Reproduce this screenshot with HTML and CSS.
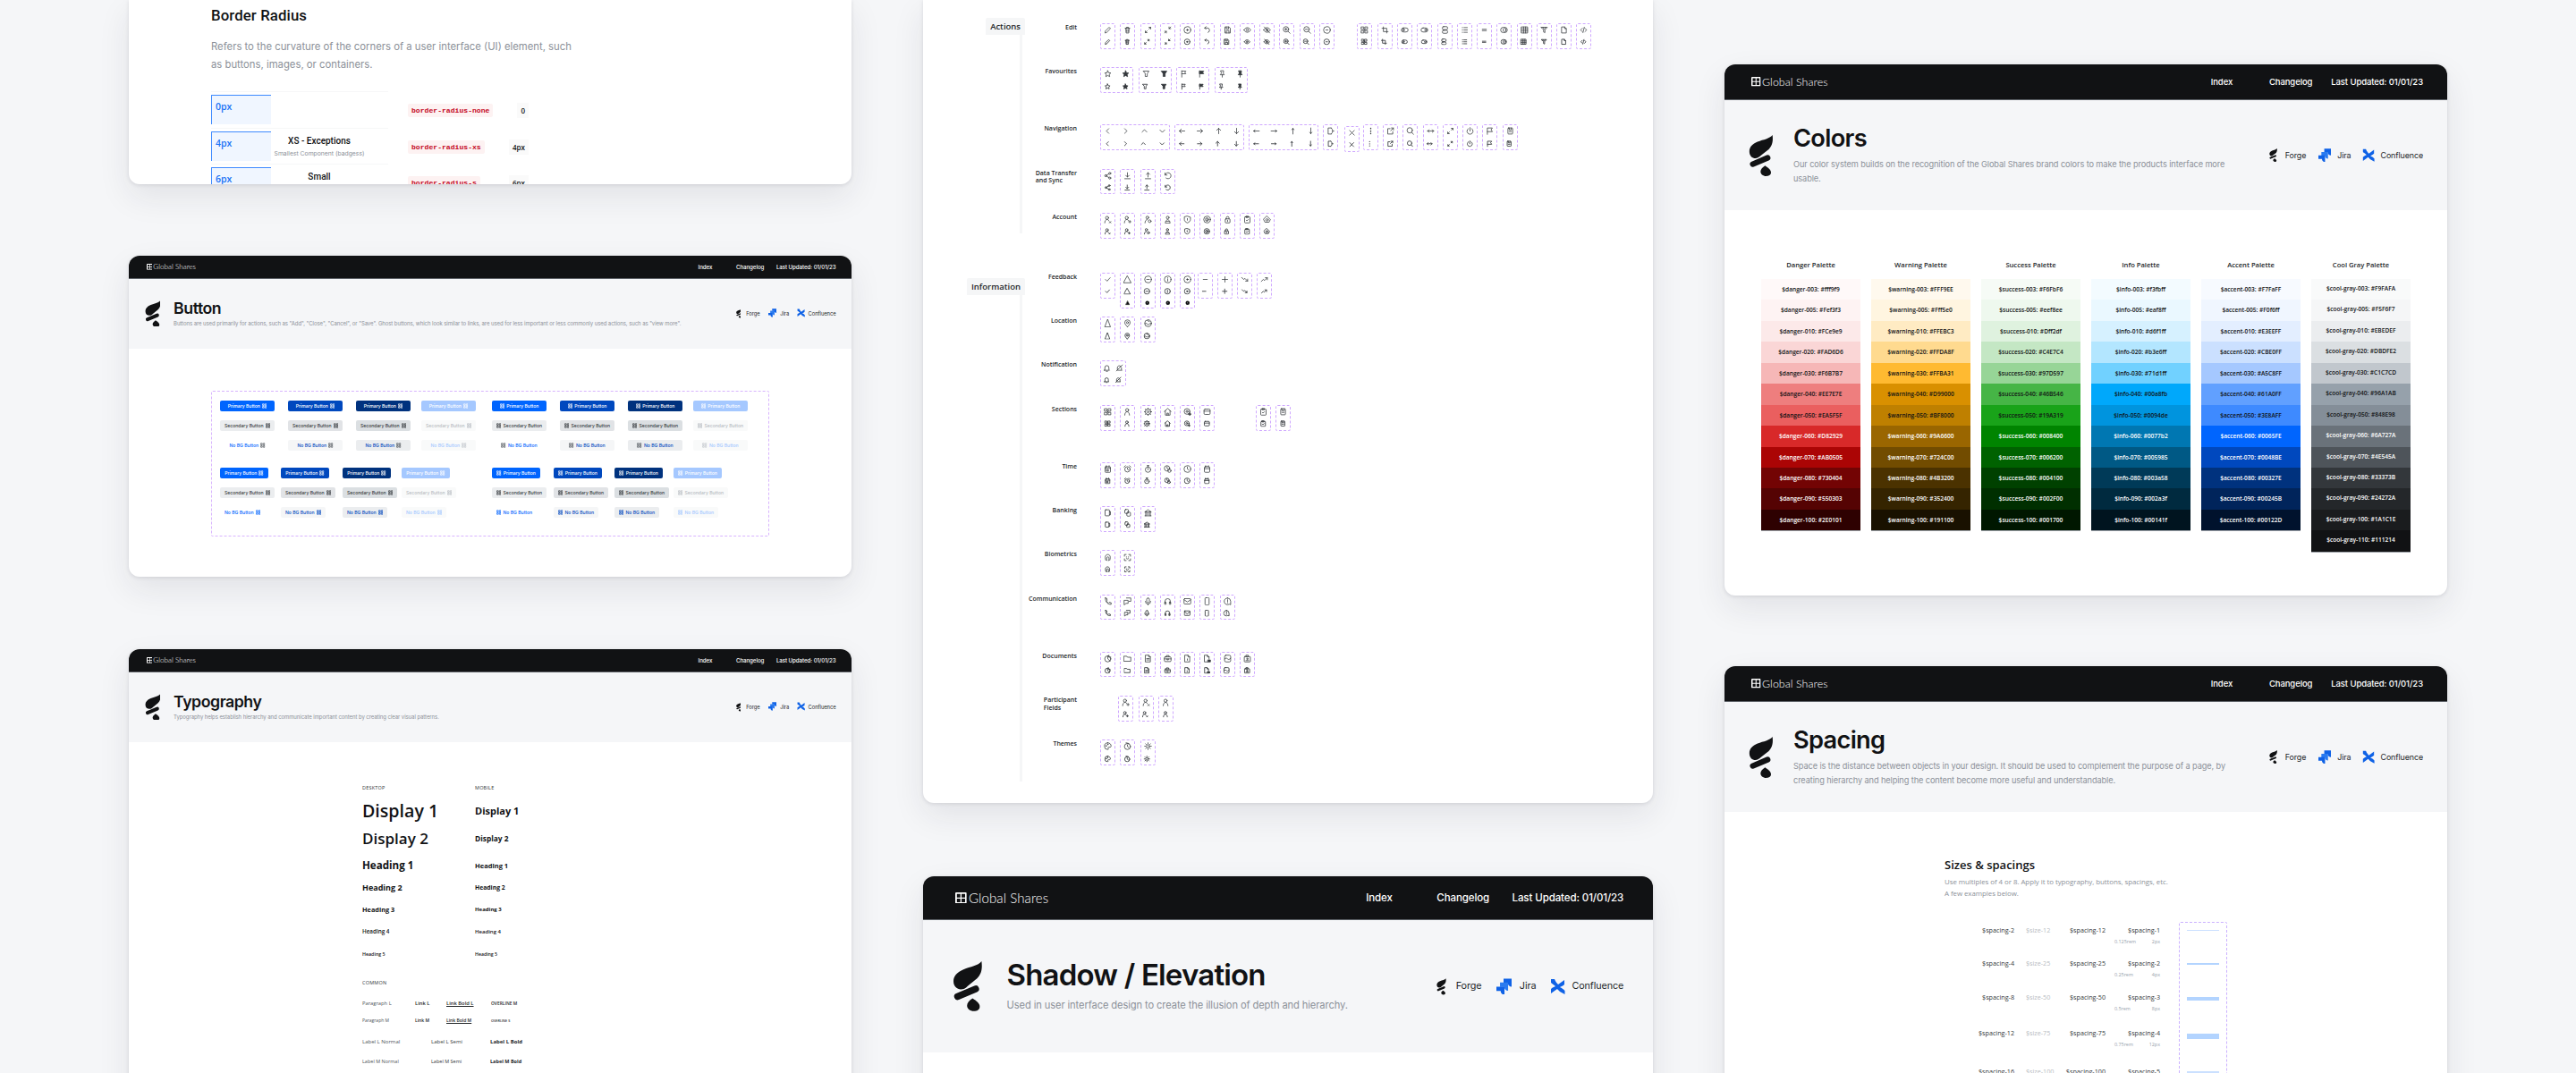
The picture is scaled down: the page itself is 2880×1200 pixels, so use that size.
FILE: index.html
```html
<!DOCTYPE html>
<html lang="en">
<head>
<meta charset="utf-8">
<title>Global Shares Design System</title>
<link rel="stylesheet" href="styles.css">
</head>
<body>
<svg class="defs" aria-hidden="true">
<symbol id="logo" viewBox="0 0 33 55"><path fill="currentColor" stroke="none" d="M32 0C28 5 20 6 12 9C5 12 1 16 1 22C1 28 5 31 9 31C12 31 14 30 17 27L27 19C32 14 33 8 32 0Z"/><path fill="none" stroke="currentColor" stroke-width="7.500" stroke-linecap="round" d="M5.500 39L25.500 30.500"/><path fill="currentColor" stroke="none" d="M22 41C27 44 30 47 30 50C30 53.500 27 55 23.500 55C19 55 16 52 16 49C16 46 18 44 22 41Z"/></symbol>
<symbol id="brand" viewBox="0 0 12 12"><path fill="currentColor" d="M0 1a1 1 0 0 1 1-1h10a1 1 0 0 1 1 1v10a1 1 0 0 1-1 1H1a1 1 0 0 1-1-1z"/><path fill="#111214" d="M1.700 1.700h3.700v3.700H1.700zM6.600 1.700h3.700v3.700H6.600zM1.700 6.600h3.700v3.700H1.700zM6.600 6.600h3.700v3.700H6.600z"/></symbol>
<symbol id="jira" viewBox="0 0 16 17"><path fill="#0f62e6" d="M7.500 0H16v8.500C13.700 8.500 12 6.800 12 4.500H7.500z"/><path fill="#2a7bf0" d="M3.800 4.200h8.500v8.500C10 12.700 8.300 11 8.300 8.700H3.800z"/><path fill="#0f62e6" d="M0 8.500h8.500V17C6.200 17 4.500 15.300 4.500 13H0z"/></symbol>
<symbol id="conf" viewBox="0 0 17 17"><path fill="#0f62e6" d="M1 0l4 0c1 3 3 5 4 6l7-5v5c-2 2-4 2.500-5 3 2 1 4 2 5.500 4v4L11 14c-2-2-2.500-2.500-3-3l-7 5v-5c2-2 4-2.500 5-3-2-2-4-3-5-4z"/></symbol>
<symbol id="ph0" viewBox="0 0 10 10"><path fill="none" stroke="currentColor" stroke-width="1.300" d="M1 1h3v3H1zM6 1h3v3H6zM1 6h3v3H1zM6 6h3v3H6z"/></symbol>
<symbol id="pe" viewBox="0 0 24 24"><path d="M4 20l1-5L16 4l4 4L9 19z"/></symbol>
<symbol id="tr" viewBox="0 0 24 24"><path d="M5 7h14M9 7V4h6v3M7 7l1 14h8l1-14M10 11v6M14 11v6"/></symbol>
<symbol id="xd" viewBox="0 0 24 24"><path d="M15 4h5v5M20 4l-5 5M9 20H4v-5M4 20l5-5"/></symbol>
<symbol id="cd" viewBox="0 0 24 24"><path d="M16 3v5h5M16 8l5-5M8 21v-5H3M8 16l-5 5"/></symbol>
<symbol id="tg" viewBox="0 0 24 24"><circle cx="12" cy="12" r="10"/><circle cx="12" cy="12" r="2" fill="currentColor"/></symbol>
<symbol id="un" viewBox="0 0 24 24"><path d="M9 2L5 6l4 4M5 6h7a7 7 0 0 1 3 13.500"/></symbol>
<symbol id="sv" viewBox="0 0 24 24"><path d="M5 3h11l4 4v14H5zM8 3v6h7V3M8 21v-7h8v7"/></symbol>
<symbol id="ey" viewBox="0 0 24 24"><path d="M2 12s4-7 10-7 10 7 10 7-4 7-10 7S2 12 2 12z"/><circle cx="12" cy="12" r="3"/></symbol>
<symbol id="eo" viewBox="0 0 24 24"><path d="M2 12s4-7 10-7 10 7 10 7-4 7-10 7S2 12 2 12zM4 3l16 18"/><circle cx="12" cy="12" r="3"/></symbol>
<symbol id="zi" viewBox="0 0 24 24"><circle cx="10" cy="10" r="8"/><path d="M16 16l6 6M6.500 10h7M10 6.500v7"/></symbol>
<symbol id="zo" viewBox="0 0 24 24"><circle cx="10" cy="10" r="8"/><path d="M16 16l6 6M6.500 10h7"/></symbol>
<symbol id="cm" viewBox="0 0 24 24"><circle cx="12" cy="12" r="10"/><path d="M9 12h6"/></symbol>
<symbol id="dg" viewBox="0 0 24 24"><path d="M3 3h7v7H3zM14 3h7v7h-7zM3 14h7v7H3zM14 14h7v7h-7zM10 10l4 4M14 10l-4 4"/></symbol>
<symbol id="cr" viewBox="0 0 24 24"><path d="M7 3v14h14M3 7h14v14"/></symbol>
<symbol id="tl" viewBox="0 0 24 24"><rect x="2" y="6" width="20" height="12" rx="6"/><circle cx="8" cy="12" r="3"/></symbol>
<symbol id="tt" viewBox="0 0 24 24"><rect x="2" y="6" width="20" height="12" rx="6"/><circle cx="16" cy="12" r="3"/></symbol>
<symbol id="st" viewBox="0 0 24 24"><rect x="4" y="2" width="16" height="9" rx="4"/><rect x="4" y="13" width="16" height="9" rx="4"/></symbol>
<symbol id="li" viewBox="0 0 24 24"><path d="M10 5h10M10 12h10M10 19h10M5 5h1M5 12h1M5 19h1"/></symbol>
<symbol id="eq" viewBox="0 0 24 24"><path d="M6 10h12M6 14h12"/></symbol>
<symbol id="cp" viewBox="0 0 24 24"><circle cx="10" cy="12" r="8"/><path d="M14 4a8 8 0 0 1 0 16M10 8v8"/></symbol>
<symbol id="gt" viewBox="0 0 24 24"><path d="M3 3h18v18H3zM3 9h18M3 15h18M9 3v18M15 3v18"/></symbol>
<symbol id="fn" viewBox="0 0 24 24"><path d="M3 4h18l-7 8v8l-4-2v-6zM8 4l3 5M16 4l-3 5"/></symbol>
<symbol id="fl" viewBox="0 0 24 24"><path d="M6 3h8l5 5v13H6zM14 3v5h5"/></symbol>
<symbol id="co" viewBox="0 0 24 24"><path d="M8 7l-5 5 5 5M16 7l5 5-5 5M14 4l-4 16"/></symbol>
<symbol id="sa" viewBox="0 0 24 24"><path d="M12 3l2.800 6 6.200.7-4.600 4.300 1.300 6.500-5.700-3.300-5.700 3.300 1.300-6.500L3 9.700 9.200 9z"/></symbol>
<symbol id="sf" viewBox="0 0 24 24"><path fill="currentColor" d="M12 3l2.800 6 6.200.7-4.600 4.300 1.300 6.500-5.700-3.300-5.700 3.300 1.300-6.500L3 9.700 9.200 9z"/></symbol>
<symbol id="fo" viewBox="0 0 24 24"><path d="M4 4h16l-5 8v8h-6v-8z"/></symbol>
<symbol id="ff" viewBox="0 0 24 24"><path fill="currentColor" d="M4 4h16l-5 8v8h-6v-8z"/></symbol>
<symbol id="fg" viewBox="0 0 24 24"><path d="M6 22V3M6 4h12l-3 4 3 4H6"/></symbol>
<symbol id="gf" viewBox="0 0 24 24"><path d="M6 22V3"/><path fill="currentColor" d="M6 4h12l-3 4 3 4H6z"/></symbol>
<symbol id="pn" viewBox="0 0 24 24"><path d="M8 3h8l-1 8 3 4H6l3-4zM12 15v7"/></symbol>
<symbol id="pf" viewBox="0 0 24 24"><path fill="currentColor" d="M8 3h8l-1 8 3 4H6l3-4z"/><path d="M12 15v7"/></symbol>
<symbol id="cl" viewBox="0 0 24 24"><path d="M15 5l-7 7 7 7"/></symbol>
<symbol id="cg" viewBox="0 0 24 24"><path d="M9 5l7 7-7 7"/></symbol>
<symbol id="cu" viewBox="0 0 24 24"><path d="M5 15l7-7 7 7"/></symbol>
<symbol id="cv" viewBox="0 0 24 24"><path d="M5 9l7 7 7-7"/></symbol>
<symbol id="al" viewBox="0 0 24 24"><path d="M20 12H4M10 6l-6 6 6 6"/></symbol>
<symbol id="ar" viewBox="0 0 24 24"><path d="M4 12h16M14 6l6 6-6 6"/></symbol>
<symbol id="au" viewBox="0 0 24 24"><path d="M12 20V4M6 10l6-6 6 6"/></symbol>
<symbol id="ad" viewBox="0 0 24 24"><path d="M12 4v16M6 14l6 6 6-6"/></symbol>
<symbol id="bl" viewBox="0 0 24 24"><path d="M21 12H4M8 9l-4 3 4 3"/></symbol>
<symbol id="bg" viewBox="0 0 24 24"><path d="M3 12h17M16 9l4 3-4 3"/></symbol>
<symbol id="bu" viewBox="0 0 24 24"><path d="M12 21V4M9 8l3-4 3 4"/></symbol>
<symbol id="bd" viewBox="0 0 24 24"><path d="M12 3v17M9 16l3 4 3-4"/></symbol>
<symbol id="lg" viewBox="0 0 24 24"><path d="M14 3H5v18h9M14 3c4 3 4 6 4 9s0 6-4 9M18 12h4"/></symbol>
<symbol id="xx" viewBox="0 0 24 24"><path d="M5 5l14 14M19 5L5 19"/></symbol>
<symbol id="dv" viewBox="0 0 24 24"><path d="M12 4v1M12 12v1M12 19v1" stroke-width="3.500"/></symbol>
<symbol id="ex" viewBox="0 0 24 24"><path d="M11 5H4v16h15v-7M13 11l8-8M15 3h6v6"/></symbol>
<symbol id="se" viewBox="0 0 24 24"><circle cx="11" cy="10" r="8"/><path d="M17 16l5 6"/></symbol>
<symbol id="ah" viewBox="0 0 24 24"><path d="M3 12h18M7 8l-4 4 4 4M17 8l4 4-4 4"/></symbol>
<symbol id="pw" viewBox="0 0 24 24"><path d="M12 2v10M7 5a9 9 0 1 0 10 0"/></symbol>
<symbol id="fb" viewBox="0 0 24 24"><path d="M5 22V3h15l-4 5 4 6H5"/></symbol>
<symbol id="cb" viewBox="0 0 24 24"><rect x="5" y="3" width="14" height="18" rx="2"/><path d="M9 3v6h6V3M9 14h6"/></symbol>
<symbol id="sh" viewBox="0 0 24 24"><circle cx="18" cy="5" r="3"/><circle cx="6" cy="12" r="3"/><circle cx="18" cy="19" r="3"/><path d="M8.500 10.500l7-4M8.500 13.500l7 4"/></symbol>
<symbol id="dl" viewBox="0 0 24 24"><path d="M12 3v13M7 11l5 5 5-5M4 21h16"/></symbol>
<symbol id="up" viewBox="0 0 24 24"><path d="M12 16V3M7 8l5-5 5 5M4 21h16"/></symbol>
<symbol id="rf" viewBox="0 0 24 24"><path d="M4 4v6h6M4 10a9 9 0 1 1 3 9"/></symbol>
<symbol id="us" viewBox="0 0 24 24"><circle cx="11" cy="7" r="4.500"/><path d="M4 22c0-6 3-10 7-10s7 4 7 10"/></symbol>
<symbol id="ux" viewBox="0 0 24 24"><circle cx="10" cy="7" r="4.500"/><path d="M3 22c0-6 3-10 7-10 2 0 4 1 5 3M17 18l4 4M21 18l-4 4"/></symbol>
<symbol id="uy" viewBox="0 0 24 24"><circle cx="10" cy="7" r="4.500"/><path d="M3 22c0-6 3-10 7-10 2 0 4 1 5 3M19 15v7M15.500 18.500h7"/></symbol>
<symbol id="ug" viewBox="0 0 24 24"><circle cx="10" cy="6" r="4"/><path d="M3 22c0-6 3-10 7-10"/><circle cx="17" cy="17" r="4"/></symbol>
<symbol id="uk" viewBox="0 0 24 24"><circle cx="12" cy="6" r="4"/><path d="M5 22c0-6 3-8 7-10 4 2 7 4 7 10zM8 17h8"/></symbol>
<symbol id="sd" viewBox="0 0 24 24"><path d="M12 2l9 3v7c0 5-4 8-9 10-5-2-9-5-9-10V5zM12 9v5"/></symbol>
<symbol id="fp" viewBox="0 0 24 24"><circle cx="12" cy="12" r="10"/><circle cx="12" cy="12" r="5"/><path d="M12 10v6"/></symbol>
<symbol id="lk" viewBox="0 0 24 24"><rect x="5" y="10" width="14" height="12" rx="2"/><path d="M8 10V7a4 4 0 0 1 8 0v3M12 14v4"/></symbol>
<symbol id="ck" viewBox="0 0 24 24"><rect x="4" y="4" width="16" height="18" rx="2"/><path d="M9 2h6v4H9zM9 14l2 2 4-4"/></symbol>
<symbol id="cc" viewBox="0 0 24 24"><path d="M12 2l10 10-4 8H6l-4-8z"/><circle cx="12" cy="13" r="3.500"/></symbol>
<symbol id="ch" viewBox="0 0 24 24"><path d="M5 12l5 5 9-10"/></symbol>
<symbol id="tw" viewBox="0 0 24 24"><path d="M12 2l11 20H1z"/></symbol>
<symbol id="cs" viewBox="0 0 24 24"><circle cx="12" cy="12" r="10"/><path d="M8 12h8"/></symbol>
<symbol id="ci" viewBox="0 0 24 24"><circle cx="12" cy="12" r="10"/><path d="M12 11v6M12 7v1"/></symbol>
<symbol id="mn" viewBox="0 0 24 24"><path d="M6 12h12"/></symbol>
<symbol id="pl" viewBox="0 0 24 24"><path d="M12 4v16M4 12h16"/></symbol>
<symbol id="td" viewBox="0 0 24 24"><path d="M3 6l6 6 4-3 8 8M21 11v6h-6"/></symbol>
<symbol id="tu" viewBox="0 0 24 24"><path d="M3 18l6-6 4 3 8-8M21 13V7h-6"/></symbol>
<symbol id="tf" viewBox="0 0 24 24"><path fill="currentColor" d="M12 3l9 18H3z"/></symbol>
<symbol id="of" viewBox="0 0 24 24"><circle cx="12" cy="12" r="6" fill="none" stroke-width="8"/></symbol>
<symbol id="nv" viewBox="0 0 24 24"><path d="M12 1l8 22H4z"/></symbol>
<symbol id="lc" viewBox="0 0 24 24"><path d="M12 23c-5-6-8-9-8-13a8 8 0 0 1 16 0c0 4-3 7-8 13z"/><circle cx="12" cy="10" r="3"/></symbol>
<symbol id="gb" viewBox="0 0 24 24"><circle cx="12" cy="12" r="10"/><path d="M3 13c5-3 6 2 9 3s4-5 9-3M12 2c-3 3 1 5 4 5"/></symbol>
<symbol id="be" viewBox="0 0 24 24"><path d="M6 17v-6a6 6 0 0 1 12 0v6l2 2H4zM10 22h4"/></symbol>
<symbol id="bo" viewBox="0 0 24 24"><path d="M6 17v-6a6 6 0 0 1 10-4M18 11v6l2 2H7M3 21L21 3"/></symbol>
<symbol id="hm" viewBox="0 0 24 24"><path d="M2 11l10-9 10 9M5 9v13h14V9M10 22v-6h4v6"/></symbol>
<symbol id="gr" viewBox="0 0 24 24"><circle cx="12" cy="12" r="3"/><circle cx="12" cy="12" r="8.500"/><path d="M12 1v2M12 21v2M1 12h2M21 12h2M4 4l2 2M18 18l2 2M4 20l2-2M18 6l2-2"/></symbol>
<symbol id="gp" viewBox="0 0 24 24"><circle cx="11" cy="11" r="3"/><circle cx="11" cy="11" r="8.500"/><path d="M19 15v8M15 19h8" stroke-width="3"/></symbol>
<symbol id="bw" viewBox="0 0 24 24"><rect x="3" y="4" width="18" height="16" rx="3"/><path d="M3 10h18"/></symbol>
<symbol id="ca" viewBox="0 0 24 24"><rect x="4" y="5" width="16" height="17" rx="3"/><path d="M4 11h16M8 2v5M16 2v5"/></symbol>
<symbol id="cw" viewBox="0 0 24 24"><rect x="4" y="5" width="16" height="17" rx="2"/><path d="M4 10h16M8 2v5M16 2v5M9 14h5v4H9z"/></symbol>
<symbol id="am" viewBox="0 0 24 24"><circle cx="12" cy="13" r="8"/><path d="M12 9v4l3 2M2 6l4-4M22 6l-4-4"/></symbol>
<symbol id="sw" viewBox="0 0 24 24"><circle cx="12" cy="14" r="8"/><path d="M9 2h6M12 2v4M12 14v-4"/></symbol>
<symbol id="hc" viewBox="0 0 24 24"><circle cx="10" cy="10" r="8"/><path d="M10 5v5l3 2"/><circle cx="17" cy="17" r="5"/></symbol>
<symbol id="kl" viewBox="0 0 24 24"><circle cx="12" cy="12" r="10"/><path d="M12 6v6l4 3"/></symbol>
<symbol id="bk" viewBox="0 0 24 24"><rect x="4" y="3" width="13" height="18" rx="2"/><path d="M17 8h3v10h-3"/></symbol>
<symbol id="cn" viewBox="0 0 24 24"><rect x="4" y="2" width="11" height="12" rx="3"/><rect x="10" y="10" width="11" height="12" rx="3"/></symbol>
<symbol id="bn" viewBox="0 0 24 24"><path d="M3 9l9-6 9 6zM5 9v12M19 9v12M9 12v6M15 12v6M3 21h18"/></symbol>
<symbol id="fi" viewBox="0 0 24 24"><path d="M6 20c-2-7-2-11 0-14 3-4 9-4 12 0 2 3 2 8 0 14M10 21c-2-6-2-10 2-11s4 5 3 11"/></symbol>
<symbol id="fs" viewBox="0 0 24 24"><path d="M3 8V3h5M16 3h5v5M21 16v5h-5M8 21H3v-5M9 10v1M15 10v1M9 15c2 2 4 2 6 0"/></symbol>
<symbol id="ph" viewBox="0 0 24 24"><path d="M5 2l4 1 1 6-2 2c1 3 3 5 6 6l2-2 6 1v5c-10 1-18-8-17-19z"/></symbol>
<symbol id="ct" viewBox="0 0 24 24"><path d="M9 2h13v10h-5M3 9h11v9H8l-5 4z"/></symbol>
<symbol id="mi" viewBox="0 0 24 24"><rect x="8" y="2" width="8" height="14" rx="4"/><path d="M4 12a8 8 0 0 0 16 0M12 20v3"/></symbol>
<symbol id="hs" viewBox="0 0 24 24"><path d="M4 18v-6a8 8 0 0 1 16 0v6"/><rect x="3" y="14" width="4" height="7" rx="1"/><rect x="17" y="14" width="4" height="7" rx="1"/></symbol>
<symbol id="ma" viewBox="0 0 24 24"><rect x="2" y="4" width="20" height="16" rx="2"/><path d="M2 7l10 7 10-7"/></symbol>
<symbol id="mo" viewBox="0 0 24 24"><rect x="6" y="1" width="12" height="22" rx="3"/></symbol>
<symbol id="tk" viewBox="0 0 24 24"><path d="M12 2a10 10 0 1 0 5 18.500L21 22V12A10 10 0 0 0 12 2zM12 7v6M12 16v1"/></symbol>
<symbol id="pc" viewBox="0 0 24 24"><circle cx="12" cy="13" r="9"/><path d="M12 4v9l7 6M15 2v6h6"/></symbol>
<symbol id="fd" viewBox="0 0 24 24"><path d="M2 5h8l2 3h10v12H2z"/></symbol>
<symbol id="ft" viewBox="0 0 24 24"><path d="M5 2h9l5 5v15H5zM14 2v5h5M8 12h8M8 16h8"/></symbol>
<symbol id="bc" viewBox="0 0 24 24"><rect x="2" y="7" width="20" height="14" rx="3"/><path d="M8 7V3h8v4M2 13h20M10 13v3h4v-3"/></symbol>
<symbol id="fx" viewBox="0 0 24 24"><path d="M5 2h9l5 5v15H5zM14 2v5h5M12 13v4"/></symbol>
<symbol id="fk" viewBox="0 0 24 24"><path d="M14 22H4V2h9l5 5v6M13 2v5h5"/><path fill="currentColor" d="M15 16h7v6h-7z"/></symbol>
<symbol id="im" viewBox="0 0 24 24"><rect x="3" y="2" width="18" height="20" rx="4"/><path d="M3 13c4-3 6-3 9 0s5 2 9-2"/></symbol>
<symbol id="id" viewBox="0 0 24 24"><rect x="3" y="6" width="18" height="16" rx="2"/><path d="M9 2h6v5H9zM8 18h8"/><circle cx="12" cy="13" r="2"/></symbol>
<symbol id="pa" viewBox="0 0 24 24"><path d="M12 2a10 10 0 1 0 0 20c3 0 2-3 1-4s0-3 2-3h4c2 0 3-2 3-3 0-6-4-10-10-10z"/><circle cx="12" cy="7" r="1"/><circle cx="7" cy="11" r="1"/></symbol>
<symbol id="mc" viewBox="0 0 24 24"><circle cx="12" cy="13" r="9"/><path d="M12 8v5l4 3M8 2l8 2"/></symbol>
<symbol id="su" viewBox="0 0 24 24"><circle cx="12" cy="12" r="4.500"/><path d="M12 2v3M12 19v3M2 12h3M19 12h3M5 5l2 2M17 17l2 2M5 19l2-2M17 7l2-2"/></symbol>
</svg>

<div class="canvas">
<div class="col col-a">
  <section class="card radius-card">
    <h2 class="radius-title">Border Radius</h2>
    <p class="radius-desc">Refers to the curvature of the corners of a user interface (UI) element, such as buttons, images, or containers.</p>
    <div class="radius-row">
      <div class="radius-main"><div class="radius-swatch">0px</div><div class="radius-name"></div></div>
      <code class="token">border-radius-none</code><span class="token-val">0</span>
    </div>
    <div class="radius-row">
      <div class="radius-main"><div class="radius-swatch">4px</div><div class="radius-name"><strong>XS - Exceptions</strong><small>Smallest Component (badgess)</small></div></div>
      <code class="token">border-radius-xs</code><span class="token-val">4px</span>
    </div>
    <div class="radius-row">
      <div class="radius-main"><div class="radius-swatch">6px</div><div class="radius-name"><strong>Small</strong></div></div>
      <code class="token">border-radius-s</code><span class="token-val">6px</span>
    </div>
  </section>

  <section class="card card-button">
    <nav class="topbar"><span class="brand"><svg class="brand-mark"><use href="#brand"/></svg>Global Shares</span><span class="nav-index">Index</span><span class="nav-log">Changelog</span><span>Last Updated: 01/01/23</span></nav>
    <header class="head"><svg class="head-logo"><use href="#logo"/></svg><div class="head-text"><h1>Button</h1><p>Buttons are used primarily for actions, such as "Add", "Close", "Cancel", or "Save". Ghost buttons, which look similar to links, are used for less important or less commonly used actions, such as "view more".</p></div><div class="tools"><svg class="t-forge"><use href="#logo"/></svg><span>Forge</span><svg class="t-jira"><use href="#jira"/></svg><span>Jira</span><svg class="t-conf"><use href="#conf"/></svg><span>Confluence</span></div></header>
    <div class="buttons-box">
      <div class="btn-grid top">
        <b class="btn p1">Primary Button<svg><use href="#ph0"/></svg></b><b class="btn p2">Primary Button<svg><use href="#ph0"/></svg></b><b class="btn p3">Primary Button<svg><use href="#ph0"/></svg></b><b class="btn p4">Primary Button<svg><use href="#ph0"/></svg></b><b class="btn p1"><svg><use href="#ph0"/></svg>Primary Button</b><b class="btn p2"><svg><use href="#ph0"/></svg>Primary Button</b><b class="btn p3"><svg><use href="#ph0"/></svg>Primary Button</b><b class="btn p4"><svg><use href="#ph0"/></svg>Primary Button</b>
        <b class="btn s1">Secondary Button<svg><use href="#ph0"/></svg></b><b class="btn s2">Secondary Button<svg><use href="#ph0"/></svg></b><b class="btn s3">Secondary Button<svg><use href="#ph0"/></svg></b><b class="btn s4">Secondary Button<svg><use href="#ph0"/></svg></b><b class="btn s1"><svg><use href="#ph0"/></svg>Secondary Button</b><b class="btn s2"><svg><use href="#ph0"/></svg>Secondary Button</b><b class="btn s3"><svg><use href="#ph0"/></svg>Secondary Button</b><b class="btn s4"><svg><use href="#ph0"/></svg>Secondary Button</b>
        <b class="btn n1 gi">No BG Button<svg><use href="#ph0"/></svg></b><b class="btn n2 gi">No BG Button<svg><use href="#ph0"/></svg></b><b class="btn n3 gi">No BG Button<svg><use href="#ph0"/></svg></b><b class="btn n4 gi">No BG Button<svg><use href="#ph0"/></svg></b><b class="btn n1 gi"><svg><use href="#ph0"/></svg>No BG Button</b><b class="btn n2 gi"><svg><use href="#ph0"/></svg>No BG Button</b><b class="btn n3 gi"><svg><use href="#ph0"/></svg>No BG Button</b><b class="btn n4 gi"><svg><use href="#ph0"/></svg>No BG Button</b>
      </div>
      <div class="btn-grid bottom">
        <b class="btn wp p1">Primary Button<svg><use href="#ph0"/></svg></b><b class="btn wp p2">Primary Button<svg><use href="#ph0"/></svg></b><b class="btn wp p3">Primary Button<svg><use href="#ph0"/></svg></b><b class="btn wp p4">Primary Button<svg><use href="#ph0"/></svg></b><b class="btn wp p1"><svg><use href="#ph0"/></svg>Primary Button</b><b class="btn wp p2"><svg><use href="#ph0"/></svg>Primary Button</b><b class="btn wp p3"><svg><use href="#ph0"/></svg>Primary Button</b><b class="btn wp p4"><svg><use href="#ph0"/></svg>Primary Button</b>
        <b class="btn s1">Secondary Button<svg><use href="#ph0"/></svg></b><b class="btn s2">Secondary Button<svg><use href="#ph0"/></svg></b><b class="btn s3">Secondary Button<svg><use href="#ph0"/></svg></b><b class="btn s4">Secondary Button<svg><use href="#ph0"/></svg></b><b class="btn s1"><svg><use href="#ph0"/></svg>Secondary Button</b><b class="btn s2"><svg><use href="#ph0"/></svg>Secondary Button</b><b class="btn s3"><svg><use href="#ph0"/></svg>Secondary Button</b><b class="btn s4"><svg><use href="#ph0"/></svg>Secondary Button</b>
        <b class="btn wn n1">No BG Button<svg><use href="#ph0"/></svg></b><b class="btn wn n2">No BG Button<svg><use href="#ph0"/></svg></b><b class="btn wn n3">No BG Button<svg><use href="#ph0"/></svg></b><b class="btn wn n4">No BG Button<svg><use href="#ph0"/></svg></b><b class="btn wn n1"><svg><use href="#ph0"/></svg>No BG Button</b><b class="btn wn n2"><svg><use href="#ph0"/></svg>No BG Button</b><b class="btn wn n3"><svg><use href="#ph0"/></svg>No BG Button</b><b class="btn wn n4"><svg><use href="#ph0"/></svg>No BG Button</b>
      </div>
    </div>
  </section>

  <section class="card card-type">
    <nav class="topbar"><span class="brand"><svg class="brand-mark"><use href="#brand"/></svg>Global Shares</span><span class="nav-index">Index</span><span class="nav-log">Changelog</span><span>Last Updated: 01/01/23</span></nav>
    <header class="head"><svg class="head-logo"><use href="#logo"/></svg><div class="head-text"><h1>Typography</h1><p>Typography helps establish hierarchy and communicate important content by creating clear visual patterns.</p></div><div class="tools"><svg class="t-forge"><use href="#logo"/></svg><span>Forge</span><svg class="t-jira"><use href="#jira"/></svg><span>Jira</span><svg class="t-conf"><use href="#conf"/></svg><span>Confluence</span></div></header>
    <div class="type-body">
      <div class="type-grid">
        <span class="over">DESKTOP</span><span class="over">MOBILE</span>
        <span class="d1">Display 1</span><span class="m1">Display 1</span>
        <span class="d2">Display 2</span><span class="m2">Display 2</span>
        <span class="h1">Heading 1</span><span class="mh1">Heading 1</span>
        <span class="h2">Heading 2</span><span class="mh2">Heading 2</span>
        <span class="h3">Heading 3</span><span class="mh3">Heading 3</span>
        <span class="h4">Heading 4</span><span class="mh4">Heading 4</span>
        <span class="h5">Heading 5</span><span class="mh5">Heading 5</span>
      </div>
      <div class="over common">COMMON</div>
      <div class="common-a">
        <span class="pl">Paragraph L</span><span class="ll">Link L</span><u class="ll">Link Bold L</u><span class="ov">OVERLINE M</span>
        <span class="pm">Paragraph M</span><span class="lm">Link M</span><u class="lm">Link Bold M</u><span class="ovs">OVERLINE S</span>
      </div>
      <div class="common-b">
        <span class="lab">Label L Normal</span><span class="lab mid">Label L Semi</span><span class="lab bold">Label L Bold</span>
        <span class="lab-m">Label M Normal</span><span class="lab-m mid">Label M Semi</span><span class="lab-m bold">Label M Bold</span>
      </div>
    </div>
  </section>
</div>

<div class="col col-b">
  <section class="card icons-card">
    <div class="icon-section">
      <div class="side"><h3 class="chip">Actions</h3><i class="rail"></i></div>
      <div class="rows">
        <div class="irow"><h4>Edit</h4><div class="cells">
          <i class="cell"><svg><use href="#pe"/></svg><svg><use href="#pe"/></svg></i><i class="cell"><svg><use href="#tr"/></svg><svg><use href="#tr"/></svg></i><i class="cell"><svg><use href="#xd"/></svg><svg><use href="#xd"/></svg></i><i class="cell"><svg><use href="#cd"/></svg><svg><use href="#cd"/></svg></i><i class="cell"><svg><use href="#tg"/></svg><svg><use href="#tg"/></svg></i><i class="cell"><svg><use href="#un"/></svg><svg><use href="#un"/></svg></i><i class="cell"><svg><use href="#sv"/></svg><svg><use href="#sv"/></svg></i><i class="cell"><svg><use href="#ey"/></svg><svg><use href="#ey"/></svg></i><i class="cell"><svg><use href="#eo"/></svg><svg><use href="#eo"/></svg></i><i class="cell"><svg><use href="#zi"/></svg><svg><use href="#zi"/></svg></i><i class="cell"><svg><use href="#zo"/></svg><svg><use href="#zo"/></svg></i><i class="cell"><svg><use href="#cm"/></svg><svg><use href="#cm"/></svg></i>
          <i class="cell skip"><svg><use href="#dg"/></svg><svg><use href="#dg"/></svg></i><i class="cell"><svg><use href="#cr"/></svg><svg><use href="#cr"/></svg></i><i class="cell"><svg><use href="#tl"/></svg><svg><use href="#tl"/></svg></i><i class="cell"><svg><use href="#tt"/></svg><svg><use href="#tt"/></svg></i><i class="cell"><svg><use href="#st"/></svg><svg><use href="#st"/></svg></i><i class="cell"><svg><use href="#li"/></svg><svg><use href="#li"/></svg></i><i class="cell"><svg><use href="#eq"/></svg><svg><use href="#eq"/></svg></i><i class="cell"><svg><use href="#cp"/></svg><svg><use href="#cp"/></svg></i><i class="cell"><svg><use href="#gt"/></svg><svg><use href="#gt"/></svg></i><i class="cell"><svg><use href="#fn"/></svg><svg><use href="#fn"/></svg></i><i class="cell"><svg><use href="#fl"/></svg><svg><use href="#fl"/></svg></i><i class="cell"><svg><use href="#co"/></svg><svg><use href="#co"/></svg></i>
        </div></div>
        <div class="irow tall"><h4>Favourites</h4><div class="cells">
          <i class="cell"><svg><use href="#sa"/></svg><svg><use href="#sa"/></svg><svg><use href="#sf"/></svg><svg><use href="#sf"/></svg></i><i class="cell"><svg><use href="#fo"/></svg><svg><use href="#fo"/></svg><svg><use href="#ff"/></svg><svg><use href="#ff"/></svg></i><i class="cell"><svg><use href="#fg"/></svg><svg><use href="#fg"/></svg><svg><use href="#gf"/></svg><svg><use href="#gf"/></svg></i><i class="cell"><svg><use href="#pn"/></svg><svg><use href="#pn"/></svg><svg><use href="#pf"/></svg><svg><use href="#pf"/></svg></i>
        </div></div>
        <div class="irow"><h4>Navigation</h4><div class="cells">
          <i class="cell"><svg><use href="#cl"/></svg><svg><use href="#cl"/></svg><svg><use href="#cg"/></svg><svg><use href="#cg"/></svg><svg><use href="#cu"/></svg><svg><use href="#cu"/></svg><svg><use href="#cv"/></svg><svg><use href="#cv"/></svg></i><i class="cell"><svg><use href="#al"/></svg><svg><use href="#al"/></svg><svg><use href="#ar"/></svg><svg><use href="#ar"/></svg><svg><use href="#au"/></svg><svg><use href="#au"/></svg><svg><use href="#ad"/></svg><svg><use href="#ad"/></svg></i><i class="cell"><svg><use href="#bl"/></svg><svg><use href="#bl"/></svg><svg><use href="#bg"/></svg><svg><use href="#bg"/></svg><svg><use href="#bu"/></svg><svg><use href="#bu"/></svg><svg><use href="#bd"/></svg><svg><use href="#bd"/></svg></i><i class="cell"><svg><use href="#lg"/></svg><svg><use href="#lg"/></svg></i><i class="cell lower"><svg><use href="#xx"/></svg><svg><use href="#xx"/></svg></i><i class="cell"><svg><use href="#dv"/></svg><svg><use href="#dv"/></svg></i><i class="cell"><svg><use href="#ex"/></svg><svg><use href="#ex"/></svg></i><i class="cell"><svg><use href="#se"/></svg><svg><use href="#se"/></svg></i><i class="cell"><svg><use href="#ah"/></svg><svg><use href="#ah"/></svg></i><i class="cell"><svg><use href="#xd"/></svg><svg><use href="#xd"/></svg></i><i class="cell"><svg><use href="#pw"/></svg><svg><use href="#pw"/></svg></i><i class="cell"><svg><use href="#fb"/></svg><svg><use href="#fb"/></svg></i><i class="cell"><svg><use href="#cb"/></svg><svg><use href="#cb"/></svg></i>
        </div></div>
        <div class="irow"><h4 class="two">Data Transfer<br>and Sync</h4><div class="cells">
          <i class="cell"><svg><use href="#sh"/></svg><svg><use href="#sh"/></svg></i><i class="cell"><svg><use href="#dl"/></svg><svg><use href="#dl"/></svg></i><i class="cell"><svg><use href="#up"/></svg><svg><use href="#up"/></svg></i><i class="cell"><svg><use href="#rf"/></svg><svg><use href="#rf"/></svg></i>
        </div></div>
        <div class="irow last"><h4>Account</h4><div class="cells">
          <i class="cell"><svg><use href="#ux"/></svg><svg><use href="#ux"/></svg></i><i class="cell"><svg><use href="#uy"/></svg><svg><use href="#uy"/></svg></i><i class="cell"><svg><use href="#ug"/></svg><svg><use href="#ug"/></svg></i><i class="cell"><svg><use href="#uk"/></svg><svg><use href="#uk"/></svg></i><i class="cell"><svg><use href="#sd"/></svg><svg><use href="#sd"/></svg></i><i class="cell"><svg><use href="#fp"/></svg><svg><use href="#fp"/></svg></i><i class="cell"><svg><use href="#lk"/></svg><svg><use href="#lk"/></svg></i><i class="cell"><svg><use href="#ck"/></svg><svg><use href="#ck"/></svg></i><i class="cell"><svg><use href="#cc"/></svg><svg><use href="#cc"/></svg></i>
        </div></div>
      </div>
    </div>
    <div class="icon-section info">
      <div class="side"><h3 class="chip">Information</h3><i class="rail"></i></div>
      <div class="rows">
        <div class="irow"><h4>Feedback</h4><div class="cells">
          <i class="cell"><svg><use href="#ch"/></svg><svg><use href="#ch"/></svg></i><i class="cell r3"><svg><use href="#tw"/></svg><svg><use href="#tw"/></svg><svg class="f"><use href="#tf"/></svg></i><i class="cell r3"><svg><use href="#cs"/></svg><svg><use href="#cs"/></svg><svg class="f"><use href="#of"/></svg></i><i class="cell r3"><svg><use href="#ci"/></svg><svg><use href="#ci"/></svg><svg class="f"><use href="#of"/></svg></i><i class="cell r3"><svg><use href="#tg"/></svg><svg><use href="#tg"/></svg><svg class="f"><use href="#of"/></svg></i><i class="cell nudge"><svg><use href="#mn"/></svg><svg><use href="#mn"/></svg></i><i class="cell"><svg><use href="#pl"/></svg><svg><use href="#pl"/></svg></i><i class="cell"><svg><use href="#td"/></svg><svg><use href="#td"/></svg></i><i class="cell"><svg><use href="#tu"/></svg><svg><use href="#tu"/></svg></i>
        </div></div>
        <div class="irow"><h4>Location</h4><div class="cells">
          <i class="cell"><svg><use href="#nv"/></svg><svg><use href="#nv"/></svg></i><i class="cell"><svg><use href="#lc"/></svg><svg><use href="#lc"/></svg></i><i class="cell"><svg><use href="#gb"/></svg><svg><use href="#gb"/></svg></i>
        </div></div>
        <div class="irow"><h4>Notification</h4><div class="cells">
          <i class="cell tight"><svg><use href="#be"/></svg><svg><use href="#be"/></svg><svg><use href="#bo"/></svg><svg><use href="#bo"/></svg></i>
        </div></div>
        <div class="irow tall"><h4>Sections</h4><div class="cells">
          <i class="cell"><svg><use href="#dg"/></svg><svg><use href="#dg"/></svg></i><i class="cell"><svg><use href="#us"/></svg><svg><use href="#us"/></svg></i><i class="cell"><svg><use href="#gr"/></svg><svg><use href="#gr"/></svg></i><i class="cell"><svg><use href="#hm"/></svg><svg><use href="#hm"/></svg></i><i class="cell"><svg><use href="#gp"/></svg><svg><use href="#gp"/></svg></i><i class="cell"><svg><use href="#bw"/></svg><svg><use href="#bw"/></svg></i><i class="cell skip2"><svg><use href="#ck"/></svg><svg><use href="#ck"/></svg></i><i class="cell"><svg><use href="#cb"/></svg><svg><use href="#cb"/></svg></i>
        </div></div>
        <div class="irow"><h4>Time</h4><div class="cells">
          <i class="cell"><svg><use href="#cw"/></svg><svg><use href="#cw"/></svg></i><i class="cell"><svg><use href="#am"/></svg><svg><use href="#am"/></svg></i><i class="cell"><svg><use href="#sw"/></svg><svg><use href="#sw"/></svg></i><i class="cell"><svg><use href="#hc"/></svg><svg><use href="#hc"/></svg></i><i class="cell"><svg><use href="#kl"/></svg><svg><use href="#kl"/></svg></i><i class="cell"><svg><use href="#ca"/></svg><svg><use href="#ca"/></svg></i>
        </div></div>
        <div class="irow"><h4>Banking</h4><div class="cells">
          <i class="cell"><svg><use href="#bk"/></svg><svg><use href="#bk"/></svg></i><i class="cell"><svg><use href="#cn"/></svg><svg><use href="#cn"/></svg></i><i class="cell"><svg><use href="#bn"/></svg><svg><use href="#bn"/></svg></i>
        </div></div>
        <div class="irow"><h4>Biometrics</h4><div class="cells">
          <i class="cell"><svg><use href="#fi"/></svg><svg><use href="#fi"/></svg></i><i class="cell"><svg><use href="#fs"/></svg><svg><use href="#fs"/></svg></i>
        </div></div>
        <div class="irow tall"><h4>Communication</h4><div class="cells">
          <i class="cell"><svg><use href="#ph"/></svg><svg><use href="#ph"/></svg></i><i class="cell"><svg><use href="#ct"/></svg><svg><use href="#ct"/></svg></i><i class="cell"><svg><use href="#mi"/></svg><svg><use href="#mi"/></svg></i><i class="cell"><svg><use href="#hs"/></svg><svg><use href="#hs"/></svg></i><i class="cell"><svg><use href="#ma"/></svg><svg><use href="#ma"/></svg></i><i class="cell"><svg><use href="#mo"/></svg><svg><use href="#mo"/></svg></i><i class="cell"><svg><use href="#tk"/></svg><svg><use href="#tk"/></svg></i>
        </div></div>
        <div class="irow"><h4>Documents</h4><div class="cells">
          <i class="cell"><svg><use href="#pc"/></svg><svg><use href="#pc"/></svg></i><i class="cell"><svg><use href="#fd"/></svg><svg><use href="#fd"/></svg></i><i class="cell"><svg><use href="#ft"/></svg><svg><use href="#ft"/></svg></i><i class="cell"><svg><use href="#bc"/></svg><svg><use href="#bc"/></svg></i><i class="cell"><svg><use href="#fx"/></svg><svg><use href="#fx"/></svg></i><i class="cell"><svg><use href="#fk"/></svg><svg><use href="#fk"/></svg></i><i class="cell"><svg><use href="#im"/></svg><svg><use href="#im"/></svg></i><i class="cell"><svg><use href="#id"/></svg><svg><use href="#id"/></svg></i>
        </div></div>
        <div class="irow"><h4 class="two">Participant<br>Fields</h4><div class="cells">
          <i class="cell skip1"><svg><use href="#uy"/></svg><svg><use href="#uy"/></svg></i><i class="cell"><svg><use href="#ux"/></svg><svg><use href="#ux"/></svg></i><i class="cell"><svg><use href="#us"/></svg><svg><use href="#us"/></svg></i>
        </div></div>
        <div class="irow"><h4>Themes</h4><div class="cells">
          <i class="cell"><svg><use href="#pa"/></svg><svg><use href="#pa"/></svg></i><i class="cell"><svg><use href="#mc"/></svg><svg><use href="#mc"/></svg></i><i class="cell"><svg><use href="#su"/></svg><svg><use href="#su"/></svg></i>
        </div></div>
      </div>
    </div>
  </section>

  <section class="card card-shadow">
    <nav class="topbar"><span class="brand"><svg class="brand-mark"><use href="#brand"/></svg>Global Shares</span><span class="nav-index">Index</span><span class="nav-log">Changelog</span><span>Last Updated: 01/01/23</span></nav>
    <header class="head"><svg class="head-logo"><use href="#logo"/></svg><div class="head-text"><h1>Shadow / Elevation</h1><p>Used in user interface design to create the illusion of depth and hierarchy.</p></div><div class="tools"><svg class="t-forge"><use href="#logo"/></svg><span>Forge</span><svg class="t-jira"><use href="#jira"/></svg><span>Jira</span><svg class="t-conf"><use href="#conf"/></svg><span>Confluence</span></div></header>
  </section>
</div>

<div class="col col-c">
  <section class="card card-colors">
    <nav class="topbar"><span class="brand"><svg class="brand-mark"><use href="#brand"/></svg>Global Shares</span><span class="nav-index">Index</span><span class="nav-log">Changelog</span><span>Last Updated: 01/01/23</span></nav>
    <header class="head"><svg class="head-logo"><use href="#logo"/></svg><div class="head-text"><h1>Colors</h1><p>Our color system builds on the recognition of the Global Shares brand colors to make the products interface more usable.</p></div><div class="tools"><svg class="t-forge"><use href="#logo"/></svg><span>Forge</span><svg class="t-jira"><use href="#jira"/></svg><span>Jira</span><svg class="t-conf"><use href="#conf"/></svg><span>Confluence</span></div></header>
    <div class="palettes">
      <div class="palette"><h5>Danger Palette</h5><ul>
        <li style="background:#fff9f9">$danger-003: #fff9f9</li><li style="background:#fef3f3">$danger-005: #Fef3f3</li><li style="background:#fce9e9">$danger-010: #FCe9e9</li><li style="background:#fad6d6">$danger-020: #FAD6D6</li><li style="background:#f6b7b7">$danger-030: #F6B7B7</li><li style="background:#ee7e7e">$danger-040: #EE7E7E</li><li style="background:#ea5f5f">$danger-050: #EA5F5F</li><li class="on-dark" style="background:#d82929">$danger-060: #D82929</li><li class="on-dark" style="background:#ab0505">$danger-070: #AB0505</li><li class="on-dark" style="background:#730404">$danger-080: #730404</li><li class="on-dark" style="background:#550303">$danger-090: #550303</li><li class="on-dark" style="background:#2e0101">$danger-100: #2E0101</li></ul></div>
      <div class="palette"><h5>Warning Palette</h5><ul>
        <li style="background:#fff9ee">$warning-003: #FFF9EE</li><li style="background:#fff5e0">$warning-005: #Fff5e0</li><li style="background:#ffebc3">$warning-010: #FFEBC3</li><li style="background:#ffda8f">$warning-020: #FFDA8F</li><li style="background:#ffba31">$warning-030: #FFBA31</li><li style="background:#d99000">$warning-040: #D99000</li><li style="background:#bf8000">$warning-050: #BF8000</li><li class="on-dark" style="background:#9a6600">$warning-060: #9A6600</li><li class="on-dark" style="background:#724c00">$warning-070: #724C00</li><li class="on-dark" style="background:#4b3200">$warning-080: #4B3200</li><li class="on-dark" style="background:#352400">$warning-090: #352400</li><li class="on-dark" style="background:#191100">$warning-100: #191100</li></ul></div>
      <div class="palette"><h5>Success Palette</h5><ul>
        <li style="background:#f6fbf6">$success-003: #F6FbF6</li><li style="background:#eef8ee">$success-005: #eef8ee</li><li style="background:#dff2df">$success-010: #Dff2df</li><li style="background:#c4e7c4">$success-020: #C4E7C4</li><li style="background:#97d597">$success-030: #97D597</li><li style="background:#46b546">$success-040: #46B546</li><li style="background:#19a319">$success-050: #19A319</li><li class="on-dark" style="background:#008400">$success-060: #008400</li><li class="on-dark" style="background:#006200">$success-070: #006200</li><li class="on-dark" style="background:#004100">$success-080: #004100</li><li class="on-dark" style="background:#002f00">$success-090: #002F00</li><li class="on-dark" style="background:#001700">$success-100: #001700</li></ul></div>
      <div class="palette"><h5>Info Palette</h5><ul>
        <li style="background:#f3fbff">$info-003: #f3fbff</li><li style="background:#eaf8ff">$info-005: #eaf8ff</li><li style="background:#d6f1ff">$info-010: #d6f1ff</li><li style="background:#b3e6ff">$info-020: #b3e6ff</li><li style="background:#71d1ff">$info-030: #71d1ff</li><li style="background:#00a8fb">$info-040: #00a8fb</li><li style="background:#0094de">$info-050: #0094de</li><li class="on-dark" style="background:#0077b2">$info-060: #0077b2</li><li class="on-dark" style="background:#005985">$info-070: #005985</li><li class="on-dark" style="background:#003a58">$info-080: #003a58</li><li class="on-dark" style="background:#002a3f">$info-090: #002a3f</li><li class="on-dark" style="background:#00141f">$info-100: #00141f</li></ul></div>
      <div class="palette"><h5>Accent Palette</h5><ul>
        <li style="background:#f7faff">$accent-003: #F7FaFF</li><li style="background:#f0f6ff">$accent-005: #F0f6ff</li><li style="background:#e3eeff">$accent-010: #E3EEFF</li><li style="background:#cbe0ff">$accent-020: #CBE0FF</li><li style="background:#a5c8ff">$accent-030: #A5C8FF</li><li style="background:#61a0ff">$accent-040: #61A0FF</li><li style="background:#3e8aff">$accent-050: #3E8AFF</li><li class="on-dark" style="background:#0065fe">$accent-060: #0065FE</li><li class="on-dark" style="background:#0048be">$accent-070: #0048BE</li><li class="on-dark" style="background:#00327e">$accent-080: #00327E</li><li class="on-dark" style="background:#00245b">$accent-090: #00245B</li><li class="on-dark" style="background:#00122d">$accent-100: #00122D</li></ul></div>
      <div class="palette gray"><h5>Cool Gray Palette</h5><ul>
        <li style="background:#f9fafa">$cool-gray-003: #F9FAFA</li><li style="background:#f5f6f7">$cool-gray-005: #F5F6F7</li><li style="background:#ebedef">$cool-gray-010: #EBEDEF</li><li style="background:#dbdfe2">$cool-gray-020: #DBDFE2</li><li style="background:#c1c7cd">$cool-gray-030: #C1C7CD</li><li style="background:#96a1ab">$cool-gray-040: #96A1AB</li><li style="background:#848e98">$cool-gray-050: #848E98</li><li class="on-dark" style="background:#6a727a">$cool-gray-060: #6A727A</li><li class="on-dark" style="background:#4e545a">$cool-gray-070: #4E545A</li><li class="on-dark" style="background:#33373b">$cool-gray-080: #33373B</li><li class="on-dark" style="background:#24272a">$cool-gray-090: #24272A</li><li class="on-dark" style="background:#1a1c1e">$cool-gray-100: #1A1C1E</li><li class="on-dark" style="background:#111214">$cool-gray-110: #111214</li></ul></div>
    </div>
  </section>

  <section class="card card-spacing">
    <nav class="topbar"><span class="brand"><svg class="brand-mark"><use href="#brand"/></svg>Global Shares</span><span class="nav-index">Index</span><span class="nav-log">Changelog</span><span>Last Updated: 01/01/23</span></nav>
    <header class="head"><svg class="head-logo"><use href="#logo"/></svg><div class="head-text"><h1>Spacing</h1><p>Space is the distance between objects in your design. It should be used to complement the purpose of a page, by creating hierarchy and helping the content become more useful and understandable.</p></div><div class="tools"><svg class="t-forge"><use href="#logo"/></svg><span>Forge</span><svg class="t-jira"><use href="#jira"/></svg><span>Jira</span><svg class="t-conf"><use href="#conf"/></svg><span>Confluence</span></div></header>
    <div class="spacing-body">
      <h2>Sizes &amp; spacings</h2>
      <p>Use multiples of 4 or 8. Apply it to typography, buttons, spacings, etc.<br>A few examples below.</p>
      <div class="spacing-demo">
        <div class="sp-list">
          <div class="sp-row r1"><span>$spacing-2</span><em>$size-12</em><span>$spacing-12</span><span>$spacing-1</span><small><i>0.125rem</i><i>2px</i></small></div>
          <div class="sp-row r2"><span>$spacing-4</span><em>$size-25</em><span>$spacing-25</span><span>$spacing-2</span><small><i>0.25rem</i><i>4px</i></small></div>
          <div class="sp-row r3"><span>$spacing-8</span><em>$size-50</em><span>$spacing-50</span><span>$spacing-3</span><small><i>0.5rem</i><i>8px</i></small></div>
          <div class="sp-row r4"><span>$spacing-12</span><em>$size-75</em><span>$spacing-75</span><span>$spacing-4</span><small><i>0.75rem</i><i>12px</i></small></div>
          <div class="sp-row"><span>$spacing-16</span><em>$size-100</em><span>$spacing-100</span><span>$spacing-5</span></div>
        </div>
        <div class="sp-box"><i class="b1"></i><i class="b2"></i><i class="b3"></i><i class="b4"></i><i class="b5"></i></div>
      </div>
    </div>
  </section>
</div>
</div>
</body>
</html>
```
FILE: styles.css
```css
* { box-sizing: border-box; }
html, body { margin: 0; height: 1200px; overflow: hidden; }
body { background: #f5f6f8; font-family: "Open Sans", sans-serif; color: #111214; }
.defs { width: 0; height: 0; position: absolute; }
h1, h2, h3, h4, h5, p, ul { margin: 0; padding: 0; font-weight: 600; }
ul { list-style: none; }

.canvas { display: flex; height: 1200px; overflow: hidden; }
.col { display: flex; flex-direction: column; flex: none; }
.col-a { width: 808px; margin-left: 144px; gap: 80px; }
.col-b { width: 816px; margin-left: 80px; gap: 82px; }
.col-c { width: 808px; margin-left: 80px; gap: 79px; padding-top: 72px; }

.card {
  flex: none;
  background: #fff;
  border-radius: 12px;
  overflow: hidden;
  box-shadow: 0 1px 4px rgba(30, 35, 50, .12), 0 14px 36px rgba(30, 35, 50, .09);
}
.card-button { height: 359px; }
.card-type { height: 700px; margin-top: 1px; }
.card-shadow { height: 400px; }
.card-colors { height: 594px; }
.card-spacing { height: 700px; }

/* page header shared by all cards, em-scaled */
.card-button, .card-type { font-size: 6.5px; --nav: 25.5px; --head: 78px; }
.card-colors, .card-spacing { font-size: 10px; --nav: 40px; --head: 123px; }
.card-shadow { font-size: 12.15px; --nav: 49px; --head: 148px; }
.topbar {
  height: var(--nav);
  background: #111214;
  border-bottom: 1px solid #5c6066;
  color: #fff;
  display: flex;
  align-items: center;
  padding: 0 2.7em 0 3em;
  font-family: Inter, sans-serif;
  font-weight: 500;
}
.topbar span { font-size: .95em; letter-spacing: -.01em; white-space: nowrap; }
.topbar .brand {
  font-family: Lato, sans-serif; font-weight: 300; font-size: 1.24em; letter-spacing: .005em;
  display: flex; align-items: center; gap: .12em; margin-right: auto;
}
.brand-mark { width: .85em; height: .85em; color: #fff; }
.nav-log { margin: 0 2.2em 0 4.3em; }
.head {
  height: var(--head);
  background: #f5f6f8;
  display: flex;
  align-items: center;
  padding: 0 2.7em;
}
.head-logo { width: 2.75em; height: 4.6em; flex: none; color: #111214; margin-right: 2.25em; }
.head-text { flex: 1; min-width: 0; margin-right: 4em; }
.head h1 { font-family: Inter, sans-serif; font-size: 2.72em; font-weight: 600; line-height: 1.2; letter-spacing: -.025em; margin-bottom: .13em; }
.head p { font-family: Inter, sans-serif; font-weight: 400; font-size: .92em; line-height: 1.74; color: #8c9199; letter-spacing: -.01em; }
.tools { display: flex; align-items: center; flex: none; font-family: Inter, sans-serif; font-size: 1em; color: #24272a; }
.tools span { font-size: .89em; letter-spacing: -.01em; }
.t-forge { width: .9em; height: 1.7em; margin-right: .9em; color: #111214; }
.t-jira { width: 1.4em; height: 1.55em; margin: 0 .7em 0 1.4em; }
.t-conf { width: 1.4em; height: 1.55em; margin: 0 .6em 0 1.3em; }

/* border radius card */
.radius-card { height: 206px; border-radius: 0 0 12px 12px; padding: 7px 0 0 92px; }
.radius-title { font-size: 16.800px; line-height: 20px; font-family: Roboto, sans-serif; font-weight: 500; letter-spacing: .1px; }
.radius-desc { font-family: Inter, sans-serif; font-weight: 400; font-size: 11.300px; line-height: 20px; color: #8c9199; width: 410px; margin-top: 15px; margin-bottom: 20px; }
.radius-row { display: grid; grid-template-columns: 198px 22px 96px 39px; height: 40.500px; align-items: center; }
.radius-main { grid-column: 1; display: flex; align-items: flex-start; border-top: 1px solid #f6f7f8; padding-top: 3px; height: 40.500px; }
.radius-swatch { width: 67px; height: 33px; flex: none; background: #f0f6ff; border-left: 1px solid #3e8aff; border-top: 1px solid #3e8aff; border-top-left-radius: 1px; color: #1a73f5; font-size: 10.500px; font-weight: 600; padding: 5px 0 0 4px; }
.radius-name { width: 108px; flex: none; text-align: center; display: flex; flex-direction: column; padding-top: 4px; }
.radius-name strong { font-family: Roboto, sans-serif; font-weight: 500; font-size: 10px; line-height: 14px; }
.radius-name small { font-family: Inter, sans-serif; font-size: 6.800px; color: #8c9199; line-height: 14px; }
.token { grid-column: 3; justify-self: start; font-family: "Liberation Mono", monospace; font-weight: 700; font-size: 8.100px; color: #c4051c; background: #fdf2f2; padding: 3px 4px; border-radius: 2px; white-space: nowrap; margin-top: 3px; }
.token-val { grid-column: 4; justify-self: end; font-size: 8px; font-weight: 600; background: #fafafa; padding: 3px 4px; margin-top: 3px; }

/* buttons */
.buttons-box { margin: 47px 0 0 92px; width: 624px; height: 163px; border: 1px dashed #d8b4fe; border-radius: 2px; padding: 10px 0 0 9px; }
.btn-grid { display: grid; justify-items: start; row-gap: 10px; }
.btn-grid.top { grid-template-columns: 76px 76px 73px 79px 76px 76px 73px 61px; }
.btn-grid.bottom { grid-template-columns: 68px 69px 66px 101px 69px 68px 66px 61px; margin-top: 19px; }
.btn {
  width: 61px; height: 12px; border-radius: 2px;
  display: flex; align-items: center; justify-content: center; gap: 2px;
  font-family: Inter, sans-serif; font-weight: 500; font-size: 5.100px; white-space: nowrap;
}
.btn svg { width: 5.500px; height: 6px; flex: none; }
.wp { width: 54px; }
.wn { width: 50px; }
.p1 { background: #0065fe; color: #fff; }
.p2 { background: #0048be; color: #fff; }
.p3 { background: #00327e; color: #fff; }
.p4 { background: #a5c8ff; color: #fff; }
.s1 { background: #ebedef; color: #33373b; }
.s2 { background: #e1e3e6; color: #33373b; }
.s3 { background: #dbdfe2; color: #33373b; }
.s4 { background: #f9fafa; color: #b8bcc2; }
.n1 { color: #0065fe; }
.n2 { background: #f5f6f7; color: #0048be; }
.n3 { background: #ebedef; color: #0048be; }
.n4 { background: #f9fafa; color: #a5c8ff; }
.gi svg { color: #4e545a; }
.gi.n4 svg { color: #c1c7cd; }

/* typography */
.type-body { padding: 40px 0 0 261px; color: #111214; }
.type-grid { display: grid; grid-template-columns: 126px auto; grid-template-rows: 22px 30px 32px 28px 22px 26px 24px 26px; align-items: center; justify-items: start; }
.over { font-size: 5.500px; letter-spacing: .2px; color: #33373b; }
.d1 { font-size: 19.600px; font-weight: 600; }
.d2 { font-size: 17px; font-weight: 600; }
.h1 { font-size: 11.600px; font-weight: 700; }
.h2 { font-size: 9px; font-weight: 700; }
.h3 { font-size: 7.300px; font-weight: 700; }
.h4 { font-size: 6.300px; font-weight: 600; }
.h5 { font-size: 5.300px; font-weight: 600; }
.m1 { font-size: 11px; font-weight: 700; }
.m2 { font-size: 8.400px; font-weight: 700; }
.mh1 { font-size: 7.500px; font-weight: 700; }
.mh2 { font-size: 6.800px; font-weight: 700; }
.mh3 { font-size: 6px; font-weight: 700; }
.mh4 { font-size: 6px; font-weight: 600; }
.mh5 { font-size: 5.200px; font-weight: 600; }
.common { margin-top: 15px; line-height: 8px; }
.common-a { display: grid; grid-template-columns: 59px 35px 50px auto; grid-template-rows: 19px 19px; align-items: center; justify-items: start; margin-top: 10px; }
.common-b { display: grid; grid-template-columns: 77px 66px auto; grid-template-rows: 22px 22px; align-items: center; justify-items: start; margin-top: 3px; }
.pl { font-size: 5.800px; color: #4e545a; }
.pm { font-size: 5px; color: #4e545a; }
.ll { font-size: 5.800px; font-weight: 600; color: #24272a; }
.lm { font-size: 5px; font-weight: 600; color: #24272a; }
.ov { font-size: 4.900px; font-weight: 600; color: #24272a; }
.ovs { font-size: 3.800px; font-weight: 600; color: #24272a; }
.lab { font-size: 6px; color: #4e545a; }
.lab-m { font-size: 5.500px; color: #4e545a; }
.mid { font-weight: 500; color: #33373b; }
.bold { font-weight: 700; color: #24272a; }

/* icon card */
.icons-card { height: 898px; border-radius: 0 0 12px 12px; padding-top: 20px; }
.icon-section { display: grid; grid-template-columns: 114px 1fr; }
.side { display: flex; flex-direction: column; align-items: flex-end; }
.chip { background: #f5f6f7; font-size: 9.500px; line-height: 19px; padding: 0 5px 0 5px; font-weight: 600; color: #24272a; border-radius: 2px 2px 0 0; }
.rail { flex: 1; width: 3px; background: #f5f6f7; margin: 0 3px 44px 0; }
.rows { padding-top: 6px; }
.info .rows { padding-top: 0; }
.info .chip { margin-top: 6px; }
.info .rail { margin-bottom: 3px; }
.irow { height: 49.300px; display: grid; grid-template-columns: 58px 1fr; column-gap: 26px; }
.irow.tall { height: 64px; }
.irow.last { height: 67px; }
.irow h4 { font-size: 7px; font-weight: 600; line-height: 8.800px; color: #24272a; padding-top: 1px; text-align: right; white-space: nowrap; }
.irow h4.two { text-align: left; justify-self: end; }
.cells { display: flex; gap: 5.270px; align-items: flex-start; color: #33373b; }
.cell {
  flex: none;
  display: grid;
  grid-auto-flow: column;
  grid-template-rows: 13.400px 13.400px;
  grid-auto-columns: 15px;
  column-gap: 5.270px;
  border: 1px dashed #cfa8ff;
  border-radius: 2.500px;
  justify-items: center;
  align-items: center;
}
.cell svg { width: 9px; height: 9px; fill: none; stroke: currentColor; stroke-width: 2; stroke-linecap: round; stroke-linejoin: round; overflow: visible; }
.cell svg:nth-child(even) { width: 7.500px; height: 7.500px; stroke-width: 2.700; transform: translateX(-.5px); }
.cell.r3 { grid-template-rows: 13.400px 13.400px 11.500px; }
.cell svg.f { width: 5.500px; height: 5.500px; color: #111214; fill: currentColor; }
.cell.tight { column-gap: 0; grid-auto-columns: 13.400px; }
.cell.lower { margin: 1.500px -2px 0 2px; }
.cell.nudge { margin-left: -2.700px; }
.cell.skip { margin-left: 20.270px; }
.cell.skip1 { margin-left: 20.270px; }
.cell.skip2 { margin-left: 40.540px; }

/* colours */
.palettes { display: grid; grid-template-columns: repeat(6, 111px); column-gap: 12px; padding: 53px 0 0 41px; align-items: start; }
.palette h5 { font-size: 7.600px; line-height: 16px; text-align: center; font-weight: 600; color: #24272a; margin-bottom: 8px; }
.palette ul { border-bottom: 1px solid #9aa0a6; }
.palette li { height: 23.450px; line-height: 23.450px; text-align: center; font-size: 6.600px; font-weight: 600; color: #111214; white-space: nowrap; }
.palette li.on-dark { color: #fff; }
.palette.gray li { line-height: 22px; }

/* spacing */
.spacing-body { padding: 50px 0 0 246px; }
.spacing-body h2 { font-size: 13px; line-height: 18px; font-weight: 600; }
.spacing-body p { font-weight: 400; font-size: 7.900px; line-height: 13.200px; color: #8c9199; margin-top: 4px; letter-spacing: -.05px; }
.spacing-demo { display: flex; gap: 21px; margin-top: 25px; }
.sp-list { width: 241px; padding-top: 3px; }
.sp-row { display: grid; grid-template-columns: 78px 13px 35px 54px 61px; grid-template-rows: 12px 14px; height: 37px; align-items: center; font-size: 7.200px; font-weight: 500; color: #33373b; white-space: nowrap; }
.sp-row.r2 { height: 38px; }
.sp-row.r3 { height: 40px; }
.sp-row.r4 { height: 43px; }
.sp-row span { text-align: right; }
.sp-row em { grid-column: 3; font-style: normal; font-weight: 400; color: #b8bcc2; }
.sp-row span:first-child { grid-column: 1; }
.sp-row small { grid-column: 5; grid-row: 2; display: flex; justify-content: space-between; padding-left: 10px; font-size: 5.400px; font-weight: 400; color: #96a1ab; }
.sp-row small i { font-style: normal; }
.sp-box { width: 54px; height: 260px; border: 1px dashed #cbb2ff; border-radius: 2px; padding: 8px 8px 0; }
.sp-box i { display: block; height: 1px; background: #cbe0ff; }
.sp-box .b2 { height: 2px; margin-top: 36px; background: #b3d4ff; }
.sp-box .b3 { height: 4px; margin-top: 36px; background: #b3d4ff; }
.sp-box .b4 { height: 6px; margin-top: 37px; background: #b3d4ff; }
.sp-box .b5 { height: 8px; margin-top: 36px; background: #cbe0ff; }
```
